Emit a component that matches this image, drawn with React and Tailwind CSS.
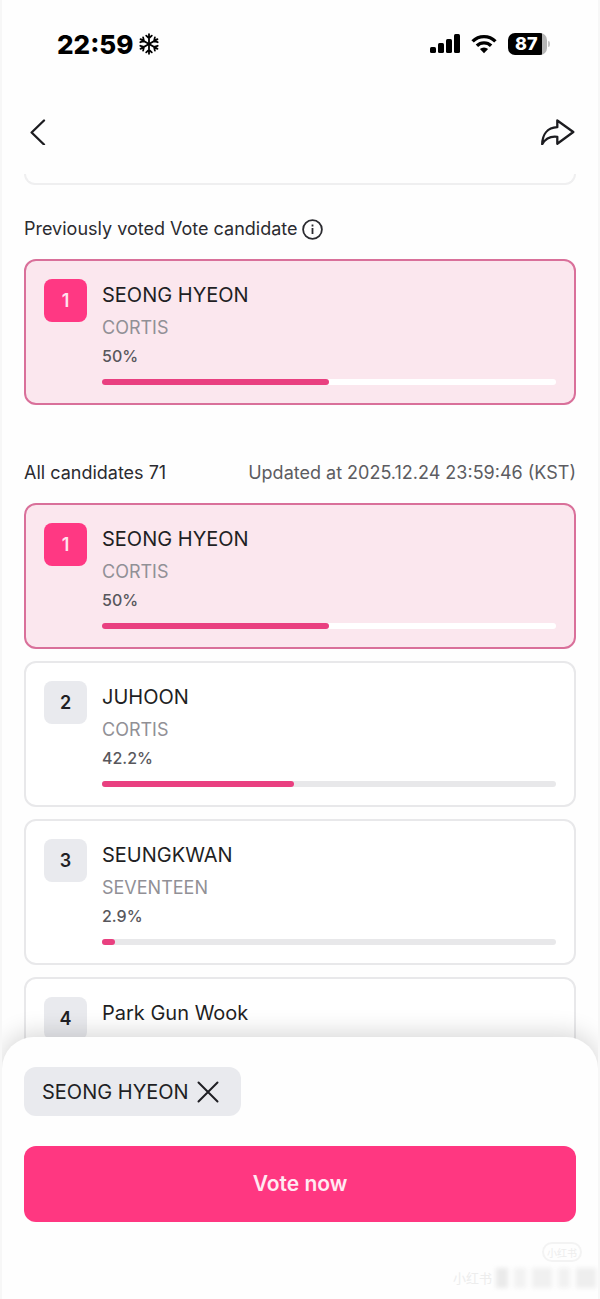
import React, { useState } from "react";

const candidates = [
  { rank: 1, name: "SEONG HYEON", group: "CORTIS", percent: 50 },
  { rank: 2, name: "JUHOON", group: "CORTIS", percent: 42.2 },
  { rank: 3, name: "SEUNGKWAN", group: "SEVENTEEN", percent: 2.9 },
  { rank: 4, name: "Park Gun Wook" },
];

const Snowflake = () => (
  <svg width="20" height="22" viewBox="0 0 20 22" fill="none" stroke="black" strokeWidth="1.8" strokeLinecap="round">
    {[0, 60, 120, 180, 240, 300].map((angle) => (
      <g key={angle} transform={`rotate(${angle} 10 11)`}>
        <path d="M10 11V1.2M7.2 2.6l2.8 2.6 2.8-2.6" />
      </g>
    ))}
  </svg>
);

const Signal = () => (
  <svg width="30" height="20" viewBox="0 0 30 20" fill="black">
    <rect x="0" y="13" width="6" height="6" rx="1.5" />
    <rect x="8" y="9" width="6" height="10" rx="1.5" />
    <rect x="16" y="5" width="6" height="14" rx="1.5" />
    <rect x="24" y="0" width="6" height="19" rx="1.5" />
  </svg>
);

const Wifi = () => (
  <svg width="26" height="20" viewBox="0 0 26 20" fill="none" stroke="black" strokeWidth="3.4">
    <path d="M1.6 7.4a16 16 0 0 1 22.8 0" />
    <path d="M5.9 11.8a10 10 0 0 1 14.2 0" />
    <path d="M13 19.2l-4.1-4.1a5.8 5.8 0 0 1 8.2 0z" fill="black" stroke="none" />
  </svg>
);

const Battery = () => (
  <div className="flex items-center gap-px">
    <div className="flex h-[22px] w-[39px] items-center overflow-hidden rounded-[7px] bg-[linear-gradient(90deg,#000_87%,#b5b5b5_87%)] pl-[7px] text-[18px] leading-[22px] font-extrabold text-white">
      87
    </div>
    <div className="h-[6px] w-[2px] rounded-r-full bg-[#c4c4c4]" />
  </div>
);

const StatusBar = () => (
  <div className="flex h-[88px] items-center justify-between pr-[50px] pl-[57px]">
    <div className="flex items-center gap-[6px] text-[26px] font-extrabold text-black">
      <span>22:59</span>
      <Snowflake />
    </div>
    <div className="flex items-center gap-[11px]">
      <Signal />
      <Wifi />
      <Battery />
    </div>
  </div>
);

const Header = () => (
  <header className="flex h-[86px] items-center justify-between pr-[25px] pl-6">
    <button aria-label="Back">
      <svg width="28" height="28" viewBox="0 0 28 28" fill="none" stroke="#1c1c20" strokeWidth="2.3" strokeLinecap="round" strokeLinejoin="round">
        <path d="M20 3.5L7.6 15.5l12.4 12" />
      </svg>
    </button>
    <button aria-label="Share">
      <svg width="35" height="28" viewBox="0 0 35 28" fill="none" stroke="#1c1c20" strokeWidth="2.3" strokeLinejoin="round">
        <path d="M17.3 3.5L33.3 15 17.3 26.8V19.8C10 18.9 5.5 21.4 2.2 27.2 2.4 18 7 10.7 17.3 10.2z" />
      </svg>
    </button>
  </header>
);

const CandidateCard = ({ candidate, selected }) => {
  const { rank, name, group, percent } = candidate;
  return (
    <article
      className={`flex gap-[15px] rounded-xl border-2 p-[18px] ${
        selected ? "border-[#d9709a] bg-[#fbe7ee]" : "border-[#e8e8ea] bg-white"
      }`}
    >
      <div
        className={`flex h-[43px] w-[43px] shrink-0 items-center justify-center rounded-lg text-[18px] font-semibold ${
          selected ? "bg-[#ff3883] text-[#ffe3ee]" : "bg-[#e9eaee] text-[#1f1f24]"
        }`}
      >
        {rank}
      </div>
      <div className="flex-1">
        <h3 className="text-[20px] leading-8 text-[#1f1f24]">{name}</h3>
        {group && <p className="mt-[5px] text-[18px] leading-6 text-[#919096]">{group}</p>}
        {percent && (
          <>
            <p className="mt-[6px] text-[16px] leading-5 font-medium text-[#58575c]">{percent}%</p>
            <div className={`mt-[13px] h-[6px] rounded-full ${selected ? "bg-white" : "bg-[#e8e8ea]"}`}>
              <div className="h-full rounded-full bg-[#e94080]" style={{ width: `${percent}%` }} />
            </div>
          </>
        )}
      </div>
    </article>
  );
};

const App = () => {
  const [picked, setPicked] = useState("SEONG HYEON");

  return (
    <div className="flex h-screen flex-col overflow-hidden border-x-2 border-[#f7f7f7] bg-[#fefefe] font-['Inter',sans-serif]">
      <div className="-mx-[2px] shrink-0">
        <StatusBar />
        <Header />
      </div>

      <main className="min-h-0 flex-1 overflow-hidden px-[22px]">
        {/* end of the banner card scrolled under the header */}
        <div className="h-[11px] rounded-b-xl border-2 border-t-0 border-[#efeff0]" />

        <section>
          <div className="mt-8 flex items-center gap-1">
            <h2 className="text-[18px] leading-6 text-[#2b2b30]">Previously voted Vote candidate</h2>
            <svg width="21" height="21" viewBox="0 0 21 21" fill="none" stroke="#2b2b30" strokeWidth="1.8">
              <circle cx="10.5" cy="10.5" r="9.4" />
              <path d="M10.5 9v6M10.5 5.6v2" />
            </svg>
          </div>
          <div className="mt-[18px]">
            <CandidateCard candidate={candidates[0]} selected />
          </div>
        </section>

        <section>
          <div className="mt-14 flex items-center justify-between text-[18px] leading-6">
            <h2 className="text-[#2b2b30]">All candidates 71</h2>
            <p className="text-[#5c5c61]">Updated at 2025.12.24 23:59:46 (KST)</p>
          </div>
          <div className="mt-[18px] flex flex-col gap-3">
            {candidates.map((candidate) => (
              <CandidateCard key={candidate.rank} candidate={candidate} selected={candidate.rank === 1} />
            ))}
          </div>
        </section>
      </main>

      <footer className="relative z-10 -mt-8 shrink-0 rounded-t-[32px] bg-[#fefefe] px-[22px] pt-[30px] shadow-[0_-4px_24px_rgba(0,0,0,0.16)]">
        {picked && (
          <div className="flex h-[49px] w-fit items-center gap-2 rounded-xl bg-[#e9eaee] pr-[22px] pl-[18px]">
            <span className="text-[20px] leading-8 text-[#1f1f24]">{picked}</span>
            <button aria-label="Remove" onClick={() => setPicked("")}>
              <svg width="22" height="22" viewBox="0 0 22 22" stroke="#1f1f24" strokeWidth="2" strokeLinecap="round">
                <path d="M1.5 1.5l19 19M20.5 1.5l-19 19" />
              </svg>
            </button>
          </div>
        )}
        <button className="mt-[30px] h-[76px] w-full rounded-xl bg-[#ff3781] text-[21px] font-semibold text-[#ffeaf2]">
          Vote now
        </button>
        <div className="-mr-5 flex h-[77px] flex-col items-end pt-5 font-['Noto_Sans_CJK_SC',sans-serif] text-[#ededed]">
          <span className="mr-[14px] flex h-5 w-10 items-center justify-center rounded-full border-2 border-[#f3f3f3] text-[10px]">
            小红书
          </span>
          <div className="mt-1 flex items-center gap-1">
            <span className="text-[13px] leading-6">小红书</span>
            <div className="flex h-5 items-stretch gap-[6px] blur-[2px]">
              <i className="w-3 bg-[#eaeaea]" />
              <i className="w-3 bg-[#f2f2f2]" />
              <i className="w-5 bg-[#f0f0f0]" />
              <i className="w-3 bg-[#f1f1f1]" />
              <i className="w-5 bg-[#eeeeee]" />
            </div>
          </div>
        </div>
      </footer>
    </div>
  );
};

export default App;
